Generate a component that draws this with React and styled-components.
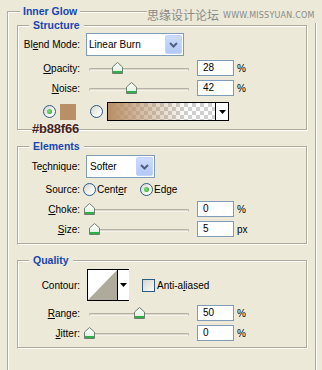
import React from 'react';
import styled, { createGlobalStyle } from 'styled-components';

const Global = createGlobalStyle`
  html, body { margin: 0; padding: 0; }
  body {
    background: #ece9d8;
    font-family: "Liberation Sans", Arial, sans-serif;
    font-size: 10px;
    color: #000;
    width: 322px;
    height: 370px;
    overflow: hidden;
  }
`;

const Page = styled.div`
  position: relative;
  width: 322px;
  height: 370px;
  padding-top: 5px;
  box-sizing: border-box;
  overflow: hidden;
`;

const Group = styled.fieldset`
  position: relative;
  margin: ${p => p.$margin || '0'};
  padding: ${p => p.$pad || '0'};
  width: ${p => p.$w}px;
  box-sizing: border-box;
  min-width: 0;
  border: 1px solid #aeab9b;
  box-shadow: inset 1px 1px 0 #fff, 1px 1px 0 #fff;
  display: flex;
  flex-direction: column;
`;

const Legend = styled.legend`
  margin-left: ${p => p.$indent}px;
  padding: 0 ${p => p.$px}px;
  font-weight: bold;
  font-size: 10.5px;
  line-height: 13px;
  color: #1746b0;
  background: #ece9d8;
`;

const Row = styled.div`
  position: relative;
  display: flex;
  align-items: center;
  height: ${p => p.$h}px;
  margin-top: ${p => p.$mt}px;
  padding-left: ${p => p.$pl || 0}px;
`;

const Label = styled.span`
  flex: none;
  width: 62px;
  text-align: right;
  white-space: nowrap;
`;

const Select = styled.div`
  flex: none;
  margin-left: 6px;
  width: ${p => p.$w}px;
  height: 23px;
  box-sizing: border-box;
  border: 1px solid #7f9db9;
  background: #fff;
  display: flex;
  align-items: center;
  padding-left: ${p => p.$pl}px;
`;

const SelectText = styled.span`
  flex: 1;
`;

const DropBtn = styled.span`
  width: 17px;
  height: 19px;
  margin-right: 1px;
  box-sizing: border-box;
  border: 1px solid #c3d3fd;
  border-radius: 2px;
  background: linear-gradient(#cddcfd, #b3c8f5);
  display: flex;
  align-items: center;
  justify-content: center;
`;

const Slider = styled.div`
  position: relative;
  flex: none;
  margin-left: 4px;
  width: 110px;
  height: 16px;
`;

const Track = styled.div`
  position: absolute;
  left: 5px;
  right: 5px;
  top: 8px;
  height: 1px;
  border: 1px solid #b5b2a3;
  border-bottom-color: #f4f3ee;
  background: #dcd9cb;
  border-radius: 2px;
`;

const ThumbSvg = styled.svg`
  position: absolute;
  top: 2px;
`;

const Field = styled.div`
  flex: none;
  margin-left: 3px;
  width: 37px;
  height: 16px;
  box-sizing: border-box;
  border: 1px solid #7f9db9;
  background: #fff;
  padding-left: 5px;
  line-height: 14px;
`;

const Unit = styled.span`
  margin-left: 3px;
`;

const RadioDot = styled.span`
  flex: none;
  position: relative;
  width: 13px;
  height: 13px;
  border-radius: 50%;
  box-sizing: border-box;
  border: 1px solid #2b5a86;
  background: linear-gradient(135deg, #d6d5cd 0%, #f4f4f0 60%, #fff 100%);
  margin-left: ${p => p.$ml || 0}px;
  &::after {
    content: '';
    display: ${p => (p.$on ? 'block' : 'none')};
    position: absolute;
    left: 3px;
    top: 3px;
    width: 5px;
    height: 5px;
    border-radius: 50%;
    background: radial-gradient(circle at 40% 40%, #7ee27e, #21a121);
  }
`;

const Option = styled.span`
  display: flex;
  align-items: center;
  margin-left: ${p => p.$ml}px;
  gap: 1px;
`;

const Swatch = styled.span`
  flex: none;
  width: 16px;
  height: 16px;
  margin-left: 4px;
  background: #b88f66;
`;

const GradientBox = styled.div`
  flex: none;
  margin-left: 4px;
  width: 122px;
  height: 19px;
  box-sizing: border-box;
  border: 1px solid #000;
  display: flex;
`;

const GradientFill = styled.span`
  flex: 1;
  background-color: #fff;
  background-image:
    linear-gradient(to right, #b88f66 0%, rgba(184, 143, 102, 0.55) 35%, rgba(184, 143, 102, 0) 75%),
    linear-gradient(45deg, #cfcfcf 25%, transparent 25%, transparent 75%, #cfcfcf 75%),
    linear-gradient(45deg, #cfcfcf 25%, transparent 25%, transparent 75%, #cfcfcf 75%);
  background-size: 100% 100%, 8px 8px, 8px 8px;
  background-position: 0 0, 0 0, 4px 4px;
`;

const ArrowCell = styled.span`
  flex: none;
  width: ${p => p.$w}px;
  border-left: 1px solid #000;
  background: #fff;
  display: flex;
  align-items: center;
  justify-content: center;
`;

const Annotation = styled.span`
  position: absolute;
  left: 14px;
  top: 19px;
  font-size: 13px;
  font-weight: bold;
  color: #45241d;
  text-shadow: 0 0 2px #fff;
  letter-spacing: -0.2px;
`;

const ContourBox = styled.div`
  flex: none;
  margin-left: 7px;
  width: 42px;
  height: 32px;
  box-sizing: border-box;
  border: 1px solid #000;
  display: flex;
`;

const ContourPreview = styled.svg`
  flex: none;
  display: block;
`;

const Checkbox = styled.span`
  flex: none;
  margin-left: 13px;
  width: 13px;
  height: 13px;
  box-sizing: border-box;
  border: 1px solid #2b5a86;
  background: linear-gradient(135deg, #d6d5cd, #fbfbf9);
`;

const CheckText = styled.span`
  margin-left: 2px;
`;

const Watermark = styled.div`
  position: absolute;
  left: 147px;
  top: 7px;
  padding-right: 6px;
  display: flex;
  align-items: center;
  gap: 4px;
  background: #ece9d8;
  color: #8a8a8a;
`;

const WmCn = styled.span`
  font-family: "Noto Sans CJK SC", sans-serif;
  font-size: 12px;
  line-height: 16px;
`;

const WmEn = styled.span`
  font-family: "DejaVu Sans", sans-serif;
  font-size: 8px;
  letter-spacing: 0.2px;
`;

const Chevron = () => (
  <svg width="9" height="6" viewBox="0 0 9 6">
    <path d="M1 1 L4.5 4.5 L8 1" fill="none" stroke="#4d6185" strokeWidth="2" />
  </svg>
);

const DownTri = () => (
  <svg width="7" height="4" viewBox="0 0 7 4">
    <path d="M0 0 H7 L3.5 4 Z" fill="#000" />
  </svg>
);

const Thumb = ({ pct }) => (
  <ThumbSvg style={{ left: `${5 + pct - 5.5}px` }} width="11" height="12" viewBox="0 0 11 12">
    <defs>
      <linearGradient id="thumbFill" x1="0" y1="0" x2="0" y2="1">
        <stop offset="0" stopColor="#ffffff" />
        <stop offset="1" stopColor="#dcefdc" />
      </linearGradient>
    </defs>
    <path d="M5.5 0.5 L10.5 5 L10.5 11.5 L0.5 11.5 L0.5 5 Z" fill="url(#thumbFill)" stroke="#6f7f70" />
    <rect x="1" y="9" width="9" height="2" fill="#2fae49" />
  </ThumbSvg>
);

const SliderRow = ({ mt, label, pct, value, unit }) => (
  <Row $h={16} $mt={mt}>
    <Label>{label}</Label>
    <Slider>
      <Track />
      <Thumb pct={pct} />
    </Slider>
    <Field>{value}</Field>
    <Unit>{unit}</Unit>
  </Row>
);

export default function App() {
  return (
    <>
      <Global />
      <Page>
        <Group $margin="0 0 0 7px" $pad="1px 8px 40px 9px" $w={309}>
          <Legend $indent={3} $px={3}>Inner Glow</Legend>

          <Group $pad="0 0 8px 0" $w={290}>
            <Legend $indent={11} $px={4}>Structure</Legend>
            <Row $h={23} $mt={1}>
              <Label>Bl<u>e</u>nd Mode:</Label>
              <Select $w={98} $pl={2}>
                <SelectText>Linear Burn</SelectText>
                <DropBtn><Chevron /></DropBtn>
              </Select>
            </Row>
            <SliderRow mt={4} label={<><u>O</u>pacity:</>} pct={28} value="28" unit="%" />
            <SliderRow mt={4} label={<><u>N</u>oise:</>} pct={42} value="42" unit="%" />
            <Row $h={19} $mt={6} $pl={25}>
              <RadioDot $on />
              <Swatch />
              <RadioDot $ml={14} />
              <GradientBox>
                <GradientFill />
                <ArrowCell $w={12}><DownTri /></ArrowCell>
              </GradientBox>
              <Annotation>#b88f66</Annotation>
            </Row>
          </Group>

          <Group $margin="10px 0 0 0" $pad="0 0 6px 0" $w={290}>
            <Legend $indent={11} $px={4}>Elements</Legend>
            <Row $h={23} $mt={2}>
              <Label>Te<u>c</u>hnique:</Label>
              <Select $w={69} $pl={3}>
                <SelectText>Softer</SelectText>
                <DropBtn><Chevron /></DropBtn>
              </Select>
            </Row>
            <Row $h={13} $mt={5}>
              <Label>Source:</Label>
              <Option $ml={3}>
                <RadioDot />
                <span>Cent<u>e</u>r</span>
              </Option>
              <Option $ml={13}>
                <RadioDot $on />
                <span>Edge</span>
              </Option>
            </Row>
            <SliderRow mt={5} label={<><u>C</u>hoke:</>} pct={0} value="0" unit="%" />
            <SliderRow mt={4} label={<><u>S</u>ize:</>} pct={5} value="5" unit="px" />
          </Group>

          <Group $margin="10px 0 0 0" $pad="0 0 6px 0" $w={290}>
            <Legend $indent={11} $px={4}>Quality</Legend>
            <Row $h={32} $mt={2}>
              <Label>Contour:</Label>
              <ContourBox>
                <ContourPreview width="29" height="30" viewBox="0 0 29 30">
                  <rect width="29" height="30" fill="#fff" />
                  <path d="M0 30 L29 0 L29 30 Z" fill="#aeab9d" />
                </ContourPreview>
                <ArrowCell $w={11}><DownTri /></ArrowCell>
              </ContourBox>
              <Checkbox />
              <CheckText>Anti-a<u>l</u>iased</CheckText>
            </Row>
            <SliderRow mt={4} label={<><u>R</u>ange:</>} pct={50} value="50" unit="%" />
            <SliderRow mt={4} label={<><u>J</u>itter:</>} pct={0} value="0" unit="%" />
          </Group>
        </Group>

        <Watermark>
          <WmCn>思缘设计论坛</WmCn>
          <WmEn>WWW.MISSYUAN.COM</WmEn>
        </Watermark>
      </Page>
    </>
  );
}
